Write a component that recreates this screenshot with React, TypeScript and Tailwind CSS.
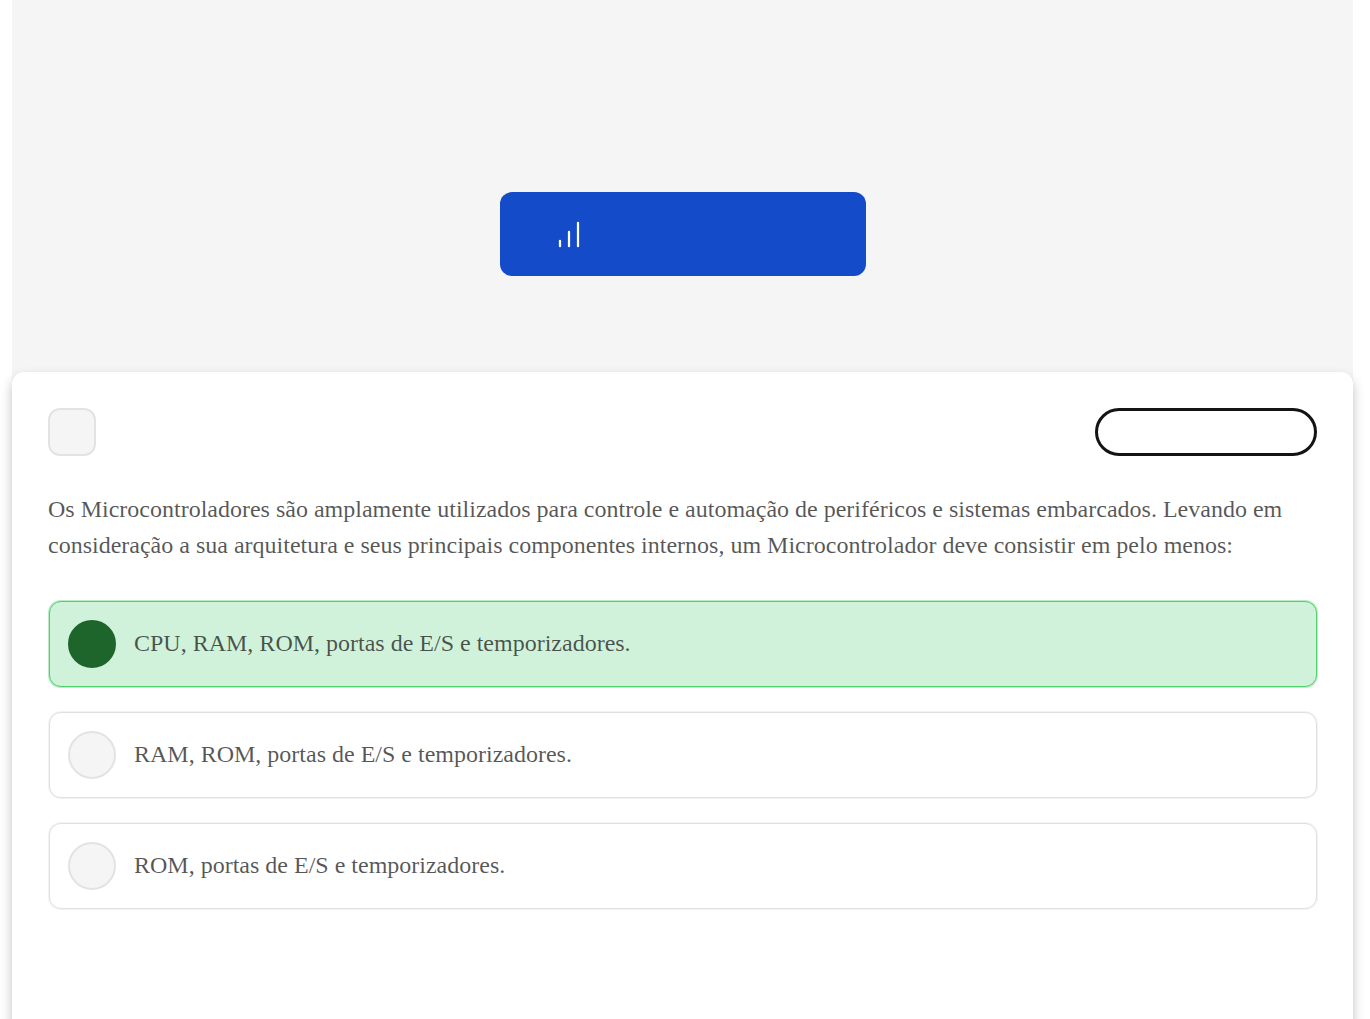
import React, { useState } from 'react';
import clsx from 'clsx';

const options = [
  'CPU, RAM, ROM, portas de E/S e temporizadores.',
  'RAM, ROM, portas de E/S e temporizadores.',
  'ROM, portas de E/S e temporizadores.',
];

const ChartIcon: React.FC = () => (
  <svg width="36" height="36" viewBox="0 0 36 36" fill="none" stroke="currentColor" strokeWidth="2.25" strokeLinecap="round" aria-hidden="true">
    <path d="M9 30.2v-5.4M18 30.2V15.8M27 30.2V6.8" />
  </svg>
);

const App: React.FC = () => {
  const [selected, setSelected] = useState(0);

  return (
    <div className="flex min-h-screen flex-col overflow-hidden bg-white pl-3 pr-[17px] font-['Liberation_Serif',serif] text-2xl leading-9 text-[#141414]/72">
      <header className="flex justify-center bg-[#f5f5f5] pt-48 pb-27">
        <button
          type="button"
          aria-label="Resultados"
          className="flex h-[84px] w-[366px] items-center rounded-xl bg-[#144bc8] px-[51px] text-white"
        >
          <ChartIcon />
        </button>
      </header>

      {/* Question card, overlaps the header so its corners sit on the gray */}
      <main className="relative -mt-3 -mb-6 flex-1 rounded-xl bg-white p-9 shadow-[0_6px_12px_rgba(0,0,0,0.25)]">
        <div className="flex items-center justify-between">
          <span className="size-12 rounded-xl border-2 border-[#e3e3e3] bg-[#f5f5f5]"></span>
          <button
            type="button"
            aria-label="Ver resposta"
            className="h-12 w-[222px] rounded-full border-3 border-[#141414]"
          ></button>
        </div>

        <fieldset className="mt-[35px]">
          <legend>
            Os Microcontroladores são amplamente utilizados para controle e automação de periféricos e sistemas
            embarcados. Levando em consideração a sua arquitetura e seus principais componentes internos, um
            Microcontrolador deve consistir em pelo menos:
          </legend>

          <div className="mt-[37px] flex flex-col gap-[25px] pt-px pl-px">
            {options.map((option, idx) => (
              <label
                key={idx}
                className={clsx(
                  'flex items-center gap-[18px] rounded-xl border p-[18px] ring-1',
                  selected === idx
                    ? 'border-[#51d06f] bg-[#d0f2da] ring-[#51d06f]/40'
                    : 'border-[#e0e0e0] bg-white ring-[#e0e0e0]/40',
                )}
              >
                <input
                  type="radio"
                  name="answer"
                  checked={selected === idx}
                  onChange={() => setSelected(idx)}
                  className="size-12 shrink-0 appearance-none rounded-full border-2 border-[#e3e3e3] bg-[#f5f5f5] checked:border-[#1e652c] checked:bg-[#1e652c]"
                />
                <span className="pb-0.5">{option}</span>
              </label>
            ))}
          </div>
        </fieldset>
      </main>
    </div>
  );
};

export default App;
